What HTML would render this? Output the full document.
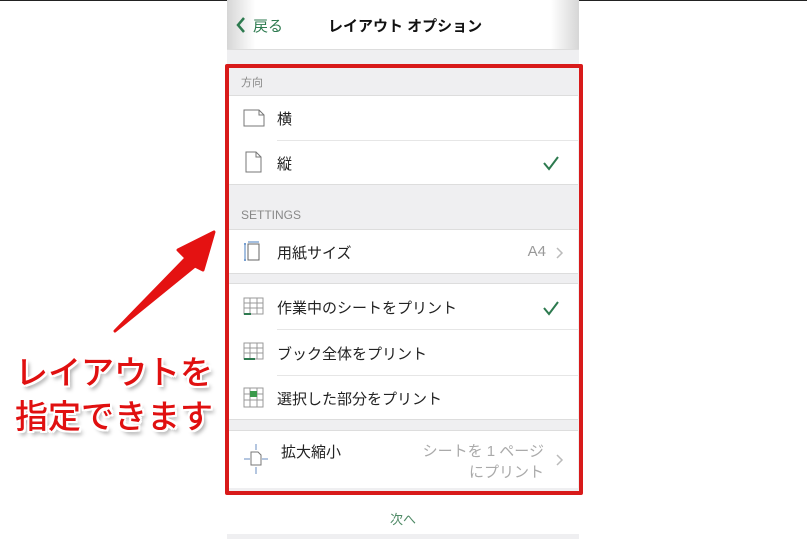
<!DOCTYPE html>
<html><head><meta charset="utf-8"><style>
*{margin:0;padding:0;box-sizing:border-box}
body{width:807px;height:539px;background:#fff;position:relative;overflow:hidden;font-family:"Liberation Sans","Noto Sans CJK JP",sans-serif;}
.abs{position:absolute}
.panel{left:227px;top:0;width:352px;height:539px;background:#efeff1}
.hdr{left:227px;top:0;width:352px;height:50px;background:linear-gradient(90deg,#d6d6d6,#fff 8%,#fff 92%,#d6d6d6);border-bottom:1px solid #ddd}
.row{position:absolute;left:229px;width:349px;background:#fff;font-size:15px;color:#222}
.row span.t{position:absolute;left:48px}
.sep{position:absolute;left:277px;right:0;height:1px;background:#e6e6e6}
.sec{position:absolute;left:241px;font-size:11px;color:#888}
.chk{position:absolute;right:18px}
.big{font-family:"Noto Sans CJK JP",sans-serif;font-size:33px;font-weight:500;color:#e01010;letter-spacing:0;
text-shadow:2px 2px 0 #fff,-2px -2px 0 #fff,2px -2px 0 #fff,-2px 2px 0 #fff,0 2px 0 #fff,2px 0 0 #fff,0 -2px 0 #fff,-2px 0 0 #fff,3px 4px 4px rgba(0,0,0,.4)}
</style></head><body>
<div class="abs" style="left:0;top:0;width:807px;height:1px;background:#222"></div>
<div class="abs panel"></div>
<div class="abs hdr"></div>
<svg class="abs" style="left:235px;top:16px" width="12" height="18"><path d="M9 2L3 9L9 16" fill="none" stroke="#2d7a4f" stroke-width="2.5"/></svg>
<div class="abs" style="left:253px;top:15px;font-size:15px;color:#2d7a4f">戻る</div>
<div class="abs" style="left:328px;top:15px;font-size:15px;font-weight:bold;color:#111">レイアウト オプション</div>

<div class="sec" style="top:74px">方向</div>
<div class="row" style="top:95px;height:90px;border-top:1px solid #ddd;border-bottom:1px solid #ddd">
 <svg class="abs" style="left:14px;top:13px" width="22" height="18"><path d="M1 1H16L21 6V17H1Z" fill="none" stroke="#777" stroke-width="1"/><path d="M16 1V6H21" fill="none" stroke="#777"/></svg>
 <span class="t" style="top:12px">横</span>
 <div class="sep" style="left:48px;top:44px"></div>
 <svg class="abs" style="left:16px;top:55px" width="18" height="22"><path d="M1 1H11L16 6V21H1Z" fill="none" stroke="#777"/><path d="M11 1V6H16" fill="none" stroke="#777"/></svg>
 <span class="t" style="top:57px">縦</span>
 <svg class="chk" style="top:59px" width="18" height="16"><path d="M2 8L7 14L16 2" fill="none" stroke="#2d7a4f" stroke-width="2"/></svg>
</div>
<div class="sec" style="top:208px;font-size:12px">SETTINGS</div>
<div class="row" style="top:229px;height:45px;border-top:1px solid #ddd;border-bottom:1px solid #ddd">
 <svg class="abs" style="left:14px;top:11px" width="20" height="22"><path d="M5 3H16V19H5Z" fill="none" stroke="#666"/><path d="M2 2V20M1 3H3M1 19H3" stroke="#4a7fc0"/><path d="M5 1H16" stroke="#4a7fc0"/></svg>
 <span class="t" style="top:12px">用紙サイズ</span>
 <span class="abs" style="right:32px;top:13px;color:#999">A4</span>
 <svg class="abs" style="right:14px;top:17px" width="8" height="12"><path d="M1 1L6 6L1 11" fill="none" stroke="#bbb" stroke-width="1.5"/></svg>
</div>
<div class="row" style="top:283px;height:137px;border-top:1px solid #ddd;border-bottom:1px solid #ddd">
 <svg class="abs" style="left:14px;top:13px" width="22" height="20"><path d="M1 1H20V17H1Z M1 6H20M1 11H20M7 1V17M14 1V17" fill="none" stroke="#999"/><path d="M1 17H8" stroke="#2d7a4f" stroke-width="2"/></svg>
 <span class="t" style="top:13px">作業中のシートをプリント</span>
 <svg class="chk" style="top:16px" width="18" height="16"><path d="M2 8L7 14L16 2" fill="none" stroke="#2d7a4f" stroke-width="2"/></svg>
 <div class="sep" style="left:48px;top:45px"></div>
 <svg class="abs" style="left:14px;top:58px" width="22" height="20"><path d="M1 1H20V17H1Z M1 6H20M1 11H20M7 1V17M14 1V17" fill="none" stroke="#999"/><path d="M1 17H12" stroke="#2d7a4f" stroke-width="2"/></svg>
 <span class="t" style="top:59px">ブック全体をプリント</span>
 <div class="sep" style="left:48px;top:91px"></div>
 <svg class="abs" style="left:14px;top:103px" width="22" height="22"><path d="M1 1H20V20H1Z M1 7H20M1 13H20M7 1V20M14 1V20" fill="none" stroke="#999"/><rect x="7" y="4" width="7" height="6" fill="#3c9a4c"/></svg>
 <span class="t" style="top:104px">選択した部分をプリント</span>
</div>
<div class="row" style="top:430px;height:58px;border-top:1px solid #ddd">
 <svg class="abs" style="left:14px;top:12px" width="26" height="32"><path d="M8 9H15L18 12V22H8Z" fill="none" stroke="#777"/><path d="M13 1V7M13 24V31M1 16H7M19 16H25" stroke="#6a8cc0"/></svg>
 <span class="t" style="left:52px;top:10px">拡大縮小</span>
 <span class="abs" style="right:34px;top:10px;color:#aaa;text-align:right;line-height:21px">シートを 1 ページ<br>にプリント</span>
 <svg class="abs" style="right:14px;top:23px" width="8" height="12"><path d="M1 1L6 6L1 11" fill="none" stroke="#bbb" stroke-width="1.5"/></svg>
</div>
<div class="abs" style="left:227px;top:494px;width:352px;height:40px;background:#fff"></div>
<div class="abs" style="left:390px;top:509px;font-size:13px;color:#4f8a66">次へ</div>

<div class="abs" style="left:225px;top:64px;width:358px;height:431px;border:4px solid #d81a1a;border-radius:2px"></div>

<svg class="abs" style="left:100px;top:220px" width="125" height="120"><path d="M15 111 L86 38 L78 30 L114 12 L103 50 L95 46 Z" fill="#e41212" stroke="#e41212" stroke-width="3" stroke-linejoin="round"/></svg>
<div class="abs big" style="left:15px;top:346px">レイアウトを</div>
<div class="abs big" style="left:15px;top:390px">指定できます</div>
</body></html>
